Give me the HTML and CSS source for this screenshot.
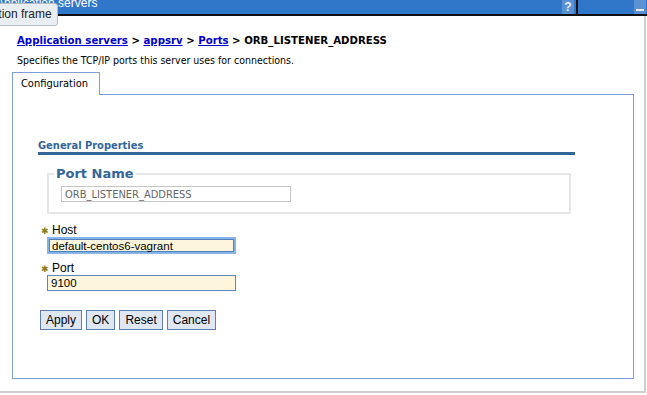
FILE: index.html
```html
<!DOCTYPE html>
<html lang="en">
<head>
    <meta charset="UTF-8">
    <title>Application servers</title>
    <link rel="stylesheet" href="styles.css">
</head>
<body>
    <div class="title-bar">
        <span class="title-text">Application servers</span>
        <div class="title-tools">
            <span class="tool-btn">?</span>
            <span class="tool-sep"></span>
            <span class="tool-btn min-btn"><span class="min-bar"></span></span>
        </div>
        <div class="tooltip">Application frame</div>
    </div>

    <div class="frame">
        <div class="content">
            <div class="breadcrumb">
                <a href="#">Application servers</a> &gt; <a href="#">appsrv</a> &gt; <a href="#">Ports</a> &gt; ORB_LISTENER_ADDRESS
            </div>
            <p class="description">Specifies the TCP/IP ports this server uses for connections.</p>

            <div class="tabs">
                <div class="tab">Configuration</div>
            </div>
            <div class="tab-panel">
                <h3 class="section-title">General Properties</h3>

                <fieldset class="port-name">
                    <legend>Port Name</legend>
                    <input class="readonly-input" type="text" value="ORB_LISTENER_ADDRESS" readonly>
                </fieldset>

                <div class="field host-field">
                    <label><span class="required">&#10033;</span>Host</label>
                    <input class="text-input focused" type="text" value="default-centos6-vagrant">
                </div>

                <div class="field port-field">
                    <label><span class="required">&#10033;</span>Port</label>
                    <input class="text-input" type="text" value="9100">
                </div>

                <div class="buttons">
                    <button class="btn">Apply</button>
                    <button class="btn">OK</button>
                    <button class="btn">Reset</button>
                    <button class="btn">Cancel</button>
                </div>
            </div>
        </div>
    </div>
</body>
</html>
```

FILE: styles.css
```css
body {
    margin: 0;
    padding: 0;
    background-color: #fff;
    font-family: "DejaVu Sans", Verdana, sans-serif;
    font-stretch: condensed;
    font-size: 11px;
    color: #000;
}

/* window title bar */
.title-bar {
    position: relative;
    height: 14px;
    background-color: #3177c9;
    border-bottom: 2px solid #111;
    color: #fff;
    font-family: "Liberation Sans", Arial, sans-serif;
    font-size: 12px;
    line-height: 12px;
}

.title-text {
    display: inline-block;
    margin-left: -4px;
    margin-top: -3px;
    vertical-align: top;
}

.title-tools {
    position: absolute;
    top: 0;
    right: 0;
    height: 14px;
    display: flex;
}

.tool-btn {
    width: 12px;
    height: 14px;
    background-color: #5a91d3;
    color: #e6eefa;
    font-weight: bold;
    font-size: 12px;
    line-height: 14px;
    text-align: center;
}

.tool-sep {
    width: 56px;
    border-left: 2px solid #111;
    margin-left: 2px;
}

.min-btn {
    position: relative;
    margin-right: 1px;
}

.min-bar {
    position: absolute;
    left: 2px;
    right: 2px;
    bottom: 3px;
    height: 2px;
    background-color: #e6eefa;
}

.tooltip {
    position: absolute;
    top: 3px;
    left: -47px;
    padding: 3px 5px 4px 5px;
    background-color: #e9eef3;
    border: 1px solid #b4bcc6;
    border-radius: 3px;
    color: #222;
    font-family: "Liberation Sans", Arial, sans-serif;
    font-size: 12px;
    line-height: 14px;
    white-space: nowrap;
}

/* page frame */
.frame {
    width: 644px;
    height: 375px;
    border-right: 2px solid #cfcfcf;
    border-bottom: 2px solid #cfcfcf;
}

.content {
    padding: 18px 0 0 12px;
}

.breadcrumb {
    margin-left: 5px;
    font-weight: bold;
    font-size: 11.3px;
    line-height: 14px;
}

.breadcrumb a {
    color: #0000cc;
}

.description {
    margin: 5px 0 0 5px;
    font-size: 10.5px;
    line-height: 14px;
}

.tabs {
    margin-top: 5px;
    display: flex;
}

.tab {
    width: 83px;
    height: 22px;
    border: 1px solid #7f9fd6;
    border-bottom: none;
    background-color: #fff;
    line-height: 22px;
    padding-right: 3px;
    text-align: center;
    margin-bottom: -1px;
    position: relative;
    z-index: 1;
}

.tab-panel {
    width: 595px;
    height: 238px;
    border: 1px solid #7f9fd6;
    padding: 45px 0 0 25px;
}

.section-title {
    width: 537px;
    margin: 0;
    padding: 0;
    font-size: 11px;
    line-height: 12px;
    color: #336699;
    border-bottom: 3px solid #336699;
}

.port-name {
    width: 508px;
    margin: 12px 0 0 9px;
    padding: 0 0 10px 12px;
    border: 2px solid #e6e6e6;
}

.port-name legend {
    padding: 0 2px;
    margin-left: -7px;
    font-size: 13px;
    font-weight: bold;
    font-stretch: normal;
    color: #336699;
    line-height: 14px;
}

.readonly-input {
    display: block;
    width: 222px;
    height: 14px;
    margin: 5px 0 0 0;
    padding: 0 3px;
    border: 1px solid #c6c6c6;
    font-family: "DejaVu Sans", Verdana, sans-serif;
    font-stretch: condensed;
    font-size: 11px;
    color: #666;
    background-color: #fff;
}

.field {
    margin-left: 3px;
}

.host-field {
    margin-top: 10px;
}

.port-field {
    margin-top: 8px;
}

.field label {
    display: block;
    font-family: "Liberation Sans", Arial, sans-serif;
    font-size: 12px;
    line-height: 12px;
}

.required {
    color: #8a7a1a;
    font-size: 9px;
    margin-right: 3px;
}

.text-input {
    display: block;
    width: 181px;
    height: 12px;
    margin: 0 0 0 6px;
    padding: 1px 3px;
    border: 1px solid #5f86b8;
    background-color: #fef6dc;
    font-family: "Liberation Sans", Arial, sans-serif;
    font-size: 11.5px;
    color: #000;
}

.focused {
    width: 179px;
    height: 11px;
    border: 2px solid #86b3e8;
    box-shadow: inset 0 0 0 1px #4f80bf;
    outline: none;
}

.buttons {
    margin: 19px 0 0 2px;
    display: flex;
    gap: 4px;
}

.btn {
    height: 20px;
    padding: 0 5px;
    border: 1px solid #5c80b3;
    background-color: #dfe7f3;
    font-family: "Liberation Sans", Arial, sans-serif;
    font-size: 12px;
    color: #000;
}
```
